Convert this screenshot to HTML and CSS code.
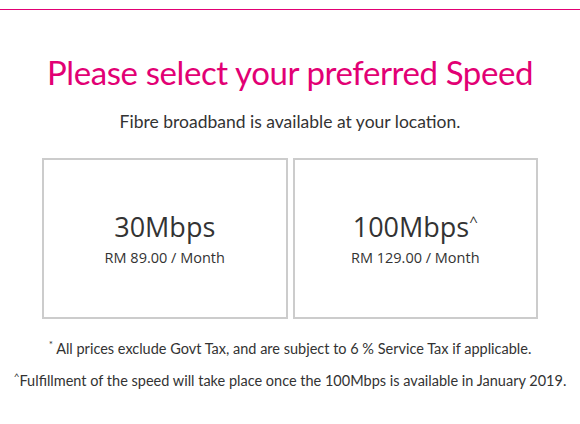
FILE: index.html
```html
<!DOCTYPE html>
<html>
<head>
    <title>Select Speed</title>
    <link rel="stylesheet" href="styles.css">
</head>
<body>
    <div class="topline"></div>
    <div class="container">
        <h1>Please select your preferred Speed</h1>
        <p class="subtitle">Fibre broadband is available at your location.</p>
        <div class="plans">
            <div class="plan">
                <div class="speed">30Mbps</div>
                <div class="price">RM 89.00 / Month</div>
            </div>
            <div class="plan">
                <div class="speed">100Mbps<sup>^</sup></div>
                <div class="price">RM 129.00 / Month</div>
            </div>
        </div>
        <div class="notes">
            <p class="note"><sup>*</sup> All prices exclude Govt Tax, and are subject to 6 % Service Tax if applicable.</p>
            <p class="note"><sup>^</sup>Fulfillment of the speed will take place once the 100Mbps is available in January 2019.</p>
        </div>
    </div>
</body>
</html>
```

FILE: styles.css
```css
body {
    margin: 0;
    padding: 0;
    background: #fff;
    color: #333;
    font-family: "Open Sans", sans-serif;
}
.topline {
    margin-top: 9px;
    height: 1px;
    background: #e20074;
}
.container {
    width: 496px;
    margin: 0 auto;
    text-align: center;
}
h1 {
    font-family: Lato, sans-serif;
    font-weight: normal;
    font-size: 33px;
    letter-spacing: -0.4px;
    white-space: nowrap;
    color: #e20074;
    margin: 42px -40px 0;
    line-height: 40px;
}
.subtitle {
    font-family: Lato, sans-serif;
    font-size: 17.5px;
    margin: 20px 0 0;
    line-height: 20px;
}
.plans {
    display: flex;
    gap: 5px;
    margin-top: 26px;
}
.plan {
    flex: 1;
    height: 157px;
    border: 2px solid #ccc;
    display: flex;
    flex-direction: column;
    justify-content: center;
    align-items: center;
}
.speed {
    font-size: 27px;
    line-height: 34px;
}
.speed sup {
    font-size: 15px;
    line-height: 0;
}
.price {
    font-size: 14.5px;
    margin-top: 4px;
}
.notes {
    margin: 0 -40px;
}
.note {
    font-family: Lato, sans-serif;
    font-size: 14.5px;
    line-height: 20px;
    margin: 20px 0 0;
}
.note + .note {
    margin-top: 12px;
}
.note sup {
    font-size: 10px;
    line-height: 0;
}
```
